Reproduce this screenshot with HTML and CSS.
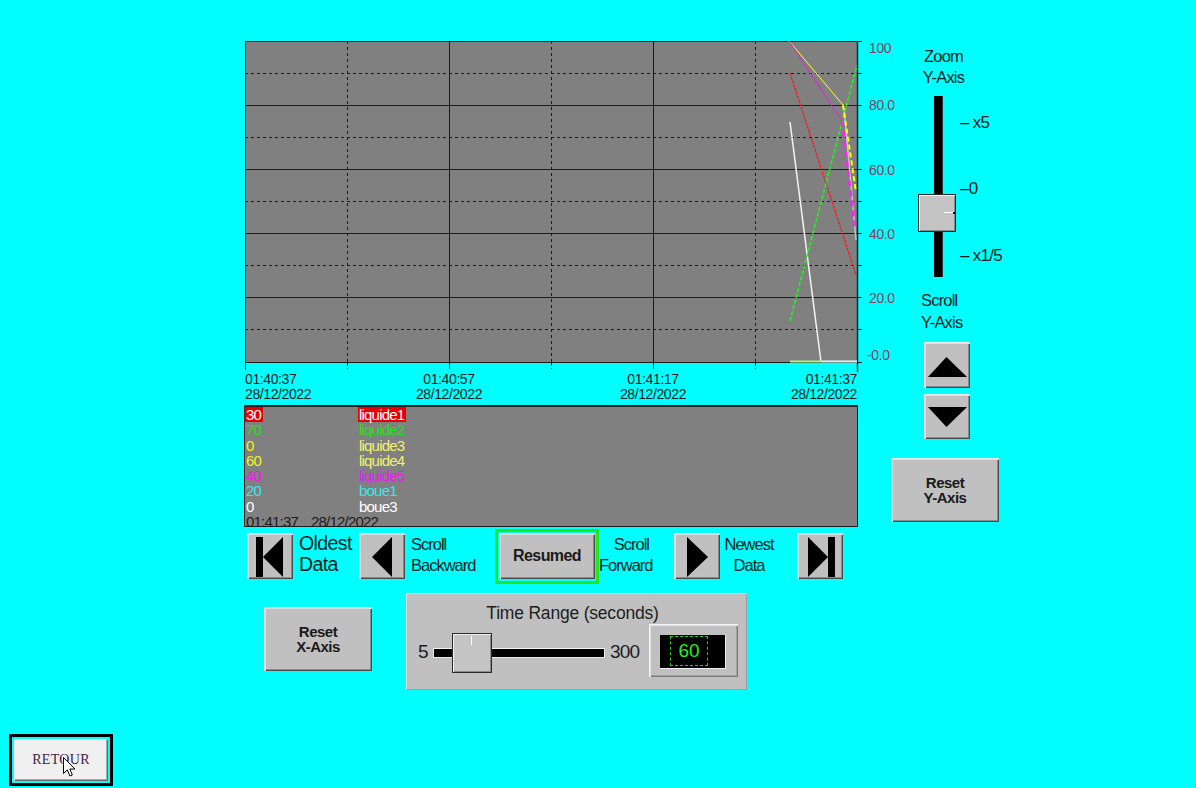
FILE: index.html
```html
<!DOCTYPE html>
<html lang="fr">
<head>
<meta charset="utf-8">
<title>Trend</title>
<link rel="stylesheet" href="styles.css">
</head>
<body>
<div class="screen">
  <div class="top">
    <div class="left">
      <svg class="chart" width="652" height="366" viewBox="240 36 652 366">
        <rect x="245" y="41" width="612" height="321" fill="#808080"/>
        <g stroke="#1c1c1c" stroke-width="1" fill="none">
          <path d="M245 73.5H857M245 137.5H857M245 201.5H857M245 265.5H857M245 329.5H857" stroke-dasharray="3 3"/>
          <path d="M347.5 41V362M551.5 41V362M755.5 41V362" stroke-dasharray="3 3"/>
          <path d="M245 105.5H862M245 169.5H862M245 233.5H862M245 297.5H862"/>
          <path d="M449.5 41V369M653.5 41V369"/>
          <path d="M245 41.5H862M245 362.5H862M245.5 41V370"/>
          <path d="M857 73.5H862M857 137.5H862M857 201.5H862M857 265.5H862M857 329.5H862"/>
          <path d="M347.5 363V369M551.5 363V369M755.5 363V369" stroke-dasharray="3 2"/>
        </g>
        <path d="M857.5 41V372" stroke="#0b3030" stroke-width="1.5"/>
        <g fill="none" stroke-linecap="butt">
          <path d="M844 108L856 240" stroke="#c4c4c4" stroke-width="1.5"/>
          <path d="M790 122L821 362" stroke="#f4f4f4" stroke-width="1.5"/>
          <path d="M790 73L856 275" stroke="#ff1414" stroke-width="1.2" stroke-dasharray="3 1"/>
          <path d="M790 321L857 65" stroke="#14ff14" stroke-width="1.5" stroke-dasharray="4 2"/>
          <path d="M789 41L843 105" stroke="#ffff30" stroke-width="1"/>
          <path d="M843 105L856 192" stroke="#ffff00" stroke-width="2" stroke-dasharray="5 3"/>
          <path d="M789 41L842 121" stroke="#e020e0" stroke-width="1"/>
          <path d="M842 121L855 228" stroke="#ff20ff" stroke-width="2.5" stroke-dasharray="6 4"/>
          <path d="M790 361.5H822" stroke="#a0ff80" stroke-width="2"/>
          <path d="M822 361.5H857" stroke="#d0ffff" stroke-width="2"/>
        </g>
        <g class="ylab">
          <text x="869" y="53">100</text>
          <text x="869" y="110">80.0</text>
          <text x="869" y="175">60.0</text>
          <text x="869" y="239">40.0</text>
          <text x="869" y="303">20.0</text>
          <text x="867" y="360">-0.0</text>
        </g>
        <g class="xlab">
          <text x="245" y="384">01:40:37</text>
          <text x="245" y="399">28/12/2022</text>
          <text x="449" y="384" text-anchor="middle">01:40:57</text>
          <text x="449" y="399" text-anchor="middle">28/12/2022</text>
          <text x="653" y="384" text-anchor="middle">01:41:17</text>
          <text x="653" y="399" text-anchor="middle">28/12/2022</text>
          <text x="857" y="384" text-anchor="end">01:41:37</text>
          <text x="857" y="399" text-anchor="end">28/12/2022</text>
        </g>
      </svg>

      <div class="legend">
        <div class="lg-row"><span class="hl">30</span><span class="hl">liquide1</span></div>
        <div class="lg-row c-green"><span>70</span><span>liquide2</span></div>
        <div class="lg-row c-yellow"><span>0</span><span class="c-paleyellow">liquide3</span></div>
        <div class="lg-row c-yellow"><span>60</span><span class="c-paleyellow">liquide4</span></div>
        <div class="lg-row c-magenta"><span>40</span><span>liquide5</span></div>
        <div class="lg-row c-cyan"><span>20</span><span>boue1</span></div>
        <div class="lg-row c-white"><span>0</span><span>boue3</span></div>
        <div class="lg-time">01:41:37<span class="lg-date">28/12/2022</span></div>
      </div>

      <div class="nav">
        <div class="btn nb b-oldest">
          <svg width="46" height="46" viewBox="0 0 46 46"><rect x="9" y="4" width="7" height="40" fill="#000"/><path d="M16 24L36 4V44Z" fill="#000"/></svg>
        </div>
        <div class="nlabel big">Oldest<br>Data</div>
        <div class="btn nb b-back">
          <svg width="46" height="46" viewBox="0 0 46 46"><path d="M13 24L33 4V44Z" fill="#000"/></svg>
        </div>
        <div class="nlabel back">Scroll<br>Backward</div>
        <div class="resumed-frame"><div class="btn tbtn resumed">Resumed</div></div>
        <div class="nlabel fwd">Scroll<br>Forward</div>
        <div class="btn nb b-fwd">
          <svg width="46" height="46" viewBox="0 0 46 46"><path d="M13 4L34 24L13 44Z" fill="#000"/></svg>
        </div>
        <div class="nlabel newest">Newest<br>Data</div>
        <div class="btn nb b-newest">
          <svg width="46" height="46" viewBox="0 0 46 46"><path d="M11 4L31 24L11 44Z" fill="#000"/><rect x="31" y="4" width="7" height="40" fill="#000"/></svg>
        </div>
      </div>

      <div class="bottom">
        <div class="btn tbtn reset-x">Reset<br>X-Axis</div>
        <div class="timepanel">
          <div class="tp-title">Time Range (seconds)</div>
          <div class="tp-row">
            <div class="tp-min">5</div>
            <div class="tp-slider">
              <div class="tp-track"></div>
              <div class="tp-thumb"><span class="tp-mark"></span></div>
            </div>
            <div class="tp-max">300</div>
            <div class="tp-display">
              <div class="tp-screen"><div class="tp-dots">60</div></div>
            </div>
          </div>
        </div>
      </div>
    </div>

    <div class="right">
      <div class="zoom-label">Zoom<br>Y-Axis</div>
      <div class="vslider">
        <div class="vtrack"></div>
        <div class="vscale">
          <div class="vs1">– x5</div>
          <div class="vs2">–0</div>
          <div class="vs3">– x1/5</div>
        </div>
        <div class="vthumb"><span class="vmark-w"></span><span class="vmark-b"></span></div>
      </div>
      <div class="scroll-label">Scroll<br>Y-Axis</div>
      <div class="btn ubtn up">
        <svg width="46" height="46" viewBox="0 0 46 46"><path d="M4 35L22.5 15L43 35Z" fill="#000"/></svg>
      </div>
      <div class="btn ubtn down">
        <svg width="46" height="45" viewBox="0 0 46 45"><path d="M4 13H43L22.5 33Z" fill="#000"/></svg>
      </div>
      <div class="btn tbtn reset-y">Reset<br>Y-Axis</div>
    </div>
  </div>

  <div class="retour-wrap">
    <div class="retour">RETOUR</div>
    <svg class="cursor" width="13" height="21" viewBox="0 0 13 21"><path d="M0.5 0.5V16.5L4.3 12.9L6.9 19L9.3 18L6.8 12H12Z" fill="#fff" stroke="#000" stroke-width="1"/></svg>
  </div>
</div>
</body>
</html>
```

FILE: styles.css
```css
:root {
  --sans: "Liberation Sans", Arial, sans-serif;
  --ink: #0c1e1e;
}

* { box-sizing: border-box; }

html, body { margin: 0; padding: 0; }

body {
  background: #00ffff;
  width: 1196px;
  height: 788px;
  overflow: hidden;
  font-family: var(--sans);
  color: var(--ink);
}

.screen {
  display: flex;
  flex-direction: column;
  height: 788px;
}

.top {
  display: flex;
  padding: 36px 0 0 240px;
}

.left {
  width: 652px;
  display: flex;
  flex-direction: column;
}

/* ---------- chart ---------- */
.chart { display: block; overflow: visible; }

.chart .ylab {
  font-family: var(--sans);
  font-size: 14px;
  letter-spacing: -0.4px;
  fill: #8e3a5e;
}

.chart .xlab {
  font-family: var(--sans);
  font-size: 14px;
  letter-spacing: -0.4px;
  fill: #102020;
}

/* ---------- legend ---------- */
.legend {
  margin: 3px 0 0 4px;
  width: 614px;
  height: 122px;
  background: #808080;
  border: 1px solid #1e1e1e;
  border-top-width: 2px;
  font-size: 15px;
  letter-spacing: -0.8px;
  line-height: 15.3px;
}

.lg-row {
  display: grid;
  grid-template-columns: 113px 1fr;
  height: 15.3px;
}

.lg-row span {
  justify-self: start;
  padding: 0 2px 0 1px;
}

.hl { background: #e80000; color: #ffffff; }
.c-green { color: #22e022; }
.c-yellow { color: #f2f21c; }
.c-paleyellow { color: #f4f070; }
.c-magenta { color: #e61ee6; }
.c-cyan { color: #3ce6e6; }
.c-white { color: #ffffff; }

.lg-time {
  color: #1c1c1c;
  padding-left: 1px;
}

.lg-date { margin-left: 13px; }

/* ---------- generic buttons ---------- */
.btn {
  background: #c0c0c0;
  box-shadow:
    inset 1px 1px 0 #f4f4f4,
    inset 2px 2px 0 #dcdcdc,
    inset -1px -1px 0 #4a4a4a,
    inset -2px -2px 0 #8a8a8a;
}

.nb, .ubtn {
  width: 46px;
  height: 46px;
  flex: none;
}

.nb svg, .ubtn svg { display: block; }

.tbtn {
  display: flex;
  align-items: center;
  justify-content: center;
  text-align: center;
  font-weight: bold;
  font-size: 15px;
  letter-spacing: -0.5px;
  line-height: 15.5px;
  color: #1a1a1a;
}

/* ---------- navigation row ---------- */
.nav {
  display: flex;
  align-items: flex-start;
  margin-top: 6px;
  height: 46px;
}

.nlabel {
  font-size: 16.5px;
  letter-spacing: -1px;
  line-height: 21px;
  padding-top: 1px;
  white-space: nowrap;
  flex: none;
}

.b-oldest { margin-left: 7px; }

.nlabel.big {
  margin-left: 6px;
  width: 60px;
  font-size: 19.5px;
  letter-spacing: -0.6px;
  line-height: 21px;
  padding-top: 0;
}

.nlabel.back {
  margin-left: 6px;
  width: 78px;
}

.resumed-frame {
  margin-left: 6px;
  margin-top: -4px;
  width: 104px;
  height: 55px;
  border: 3px solid #22e622;
  padding: 1px 0 0 1px;
  flex: none;
}

.resumed {
  width: 96px;
  height: 46px;
  font-size: 16px;
  letter-spacing: -0.6px;
}

.nlabel.fwd {
  width: 50px;
  text-align: right;
}

.b-fwd { margin-left: 25px; }

.nlabel.newest {
  margin-left: 4px;
  width: 50px;
  text-align: center;
}

.b-newest { margin-left: 23px; }

/* ---------- bottom row ---------- */
.bottom {
  display: flex;
  align-items: flex-start;
  margin-top: 14px;
}

.reset-x {
  margin: 14px 0 0 24px;
  width: 108px;
  height: 64px;
  flex: none;
}

.timepanel {
  margin-left: 34px;
  width: 341px;
  height: 97px;
  background: #c0c0c0;
  border: 1px solid;
  border-color: #eeeeee #9c9c9c #9c9c9c #eeeeee;
  flex: none;
}

.tp-title {
  padding: 8px 8px 0 0;
  text-align: center;
  font-size: 17.5px;
  letter-spacing: -0.2px;
  line-height: 22px;
  color: #1e1e1e;
}

.tp-row {
  display: flex;
  align-items: center;
  height: 53px;
  padding-left: 11px;
}

.tp-min {
  width: 15px;
  font-size: 19px;
  margin-top: 3px;
  color: #1e1e1e;
  flex: none;
}

.tp-slider {
  position: relative;
  width: 172px;
  height: 40px;
  margin-top: 5px;
  flex: none;
}

.tp-track {
  margin-top: 15px;
  height: 10px;
  background: #000;
  border: 1px solid #e8e8e8;
  border-top-color: #f4f4f4;
}

.tp-thumb {
  position: absolute;
  left: 19px;
  top: 0;
  width: 40px;
  height: 40px;
  background: #c4c4c4;
  border: 1px solid #2a2a2a;
  box-shadow: inset 1px 1px 0 #f0f0f0, inset -1px -1px 0 #8a8a8a;
}

.tp-mark {
  position: absolute;
  left: 18px;
  top: 2px;
  width: 1px;
  height: 9px;
  background: #ffffff;
}

.tp-max {
  width: 44px;
  padding-left: 5px;
  font-size: 19px;
  letter-spacing: -0.8px;
  margin-top: 3px;
  color: #1e1e1e;
  flex: none;
}

.tp-display {
  width: 89px;
  height: 53px;
  padding: 11px 0 0 11px;
  background: #c0c0c0;
  box-shadow:
    inset 1px 1px 0 #f4f4f4,
    inset 2px 2px 0 #e0e0e0,
    inset -1px -1px 0 #7a7a7a,
    inset -2px -2px 0 #a0a0a0;
  flex: none;
}

.tp-screen {
  width: 66px;
  height: 34px;
  background: #000;
  padding: 1px 0 0 10px;
  border-right: 1px solid #f0f0f0;
  border-bottom: 1px solid #f0f0f0;
}

.tp-dots {
  width: 38px;
  height: 30px;
  border: 1px dashed #1fcf1f;
  color: #24ee24;
  font-size: 19px;
  display: flex;
  align-items: center;
  justify-content: center;
}

/* ---------- right column ---------- */
.right {
  width: 120px;
  display: flex;
  flex-direction: column;
  align-items: flex-start;
}

.zoom-label {
  margin: 10px 0 0 29px;
  width: 45px;
  text-align: center;
  font-size: 16.5px;
  letter-spacing: -0.8px;
  line-height: 21px;
  white-space: nowrap;
}

.vslider {
  position: relative;
  display: flex;
  margin: 8px 0 0 26px;
  height: 181px;
  width: 94px;
}

.vtrack {
  margin-left: 16px;
  width: 9px;
  height: 181px;
  background: #000;
  border-right: 1px solid #303030;
}

.vscale {
  margin-left: 17px;
  display: flex;
  flex-direction: column;
  font-size: 17px;
  letter-spacing: -0.7px;
  line-height: 20px;
  white-space: nowrap;
}

.vs1 { margin-top: 17px; }
.vs2 { margin-top: 46px; }
.vs3 { margin-top: 47px; }

.vthumb {
  position: absolute;
  left: 0;
  top: 98px;
  width: 38px;
  height: 38px;
  background: #c4c4c4;
  border: 1px solid #2a2a2a;
  box-shadow: inset 1px 1px 0 #f0f0f0, inset -1px -1px 0 #8a8a8a;
}

.vmark-w {
  position: absolute;
  left: 25px;
  top: 17px;
  width: 9px;
  height: 1px;
  background: #ffffff;
}

.vmark-b {
  position: absolute;
  left: 34px;
  top: 17px;
  width: 2px;
  height: 2px;
  background: #000;
}

.scroll-label {
  margin: 12px 0 0 29px;
  font-size: 16.5px;
  letter-spacing: -0.8px;
  line-height: 22px;
  white-space: nowrap;
}

.up { margin: 9px 0 0 32px; }

.down {
  margin: 6px 0 0 32px;
  height: 45px;
}

.reset-y {
  margin: 19px 0 0 -1px;
  width: 108px;
  height: 64px;
}

/* ---------- RETOUR ---------- */
.retour-wrap {
  position: relative;
  margin: auto 0 2px 9px;
  width: 104px;
  height: 52px;
  border: 3px solid #000;
  padding: 2px;
}

.retour {
  height: 100%;
  background: #f0f0f0;
  box-shadow:
    inset 1px 1px 0 #ffffff,
    inset -1px -1px 0 #6a6a6a,
    inset -2px -2px 0 #a8a8a8;
  display: flex;
  align-items: center;
  justify-content: center;
  font-family: "Liberation Serif", "Times New Roman", serif;
  font-size: 14px;
  letter-spacing: 0.3px;
  color: #40224a;
}

.cursor {
  position: absolute;
  left: 51px;
  top: 20px;
  display: block;
}
```
